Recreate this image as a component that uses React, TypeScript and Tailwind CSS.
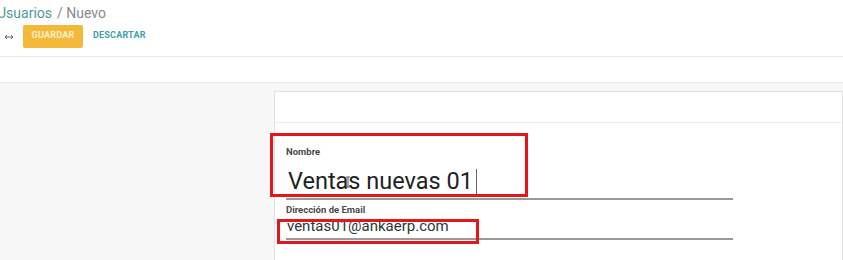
export default function App() {
  return (
    <div className="relative h-[260px] w-[843px] overflow-hidden bg-white font-['Roboto',sans-serif]">
      <div className="h-[57px] border-b border-[#e6e6e6] pl-[4px]">
        <div className="ml-[-7px] flex h-[24px] items-center pt-[1px] text-[14px] leading-none">
          <span className="text-[#4f9a98]">Usuarios</span>
          <span className="ml-[5px] text-[#8a8a8a]">/ Nuevo</span>
        </div>
        <div className="flex h-[24px] items-center">
          <svg width="10" height="6" viewBox="0 0 10 6" className="mt-[1px]">
            <path d="M1 3h8M1 3l2-2M1 3l2 2M9 3l-2-2M9 3l-2 2" stroke="#666" strokeWidth="1" fill="none" />
          </svg>
          <button className="ml-[9px] h-[23px] w-[60px] rounded-[2px] bg-[#f4b93a] text-[9px] font-bold tracking-[0.2px] text-[#fdf0c8]">
            GUARDAR
          </button>
          <button className="ml-[10px] text-[9px] font-bold tracking-[0.2px] text-[#3aa3a6]">DESCARTAR</button>
        </div>
      </div>
      <div className="h-[26px] border-b border-[#e6e6e6]" />
      <div className="h-full bg-[#f7f7f7] pl-[274px] pt-[8px]">
        <div className="h-full border border-[#e2e2e2] bg-white">
          <div className="h-[31px] border-b border-[#ececec]" />
          <div className="pl-[11px] pt-[24px]">
            <div className="text-[9.5px] font-bold leading-none text-[#4a4a4a]">Nombre</div>
            <div className="mt-[9px] flex h-[34px] w-[447px] items-center border-b-[2px] border-[#9a9a9a]">
              <span className="pl-[2px] text-[23.5px] leading-none text-[#222]">Ventas nuevas 01</span>
              <span className="ml-[3px] h-[26px] w-[1px] bg-[#666]" />
            </div>
            <div className="mt-[5px] text-[9.5px] font-bold leading-none text-[#4a4a4a]">Dirección de Email</div>
            <div className="mt-[4px] flex h-[22px] w-[447px] items-end border-b-[2px] border-[#9a9a9a] pb-[4px]">
              <span className="pl-[1px] text-[15px] leading-none text-[#333]">ventas01@ankaerp.com</span>
            </div>
          </div>
        </div>
      </div>
      <svg width="6" height="12" viewBox="0 0 6 12" className="absolute left-[345px] top-[176px]">
        <path d="M1 1h4M3 1v10M1 11h4" stroke="#555" strokeWidth="1" fill="none" />
      </svg>
      <div className="absolute left-[270px] top-[133px] h-[64px] w-[258px] border-[3px] border-[#e3161b]" />
      <div className="absolute left-[277px] top-[219px] h-[25px] w-[202px] border-[3px] border-[#e3161b]" />
    </div>
  );
}
